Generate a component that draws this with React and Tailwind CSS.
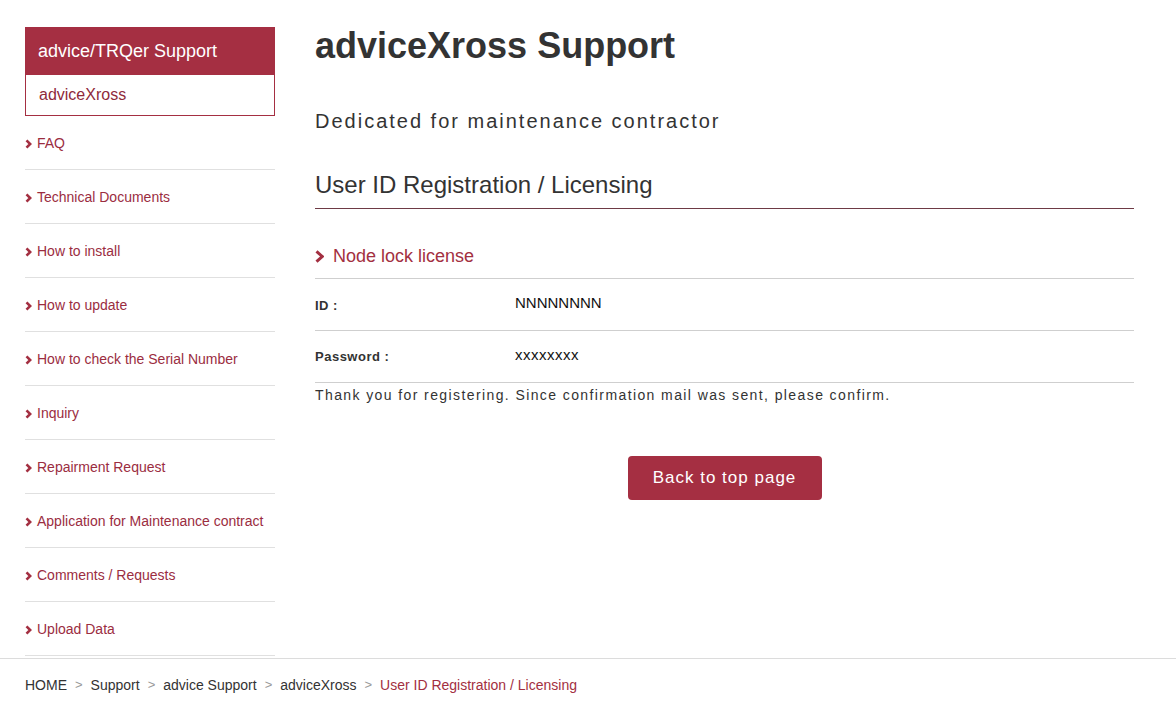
import React from "react";

const menu = [
  "FAQ",
  "Technical Documents",
  "How to install",
  "How to update",
  "How to check the Serial Number",
  "Inquiry",
  "Repairment Request",
  "Application for Maintenance contract",
  "Comments / Requests",
  "Upload Data",
];

const crumbs = ["HOME", "Support", "advice Support", "adviceXross"];

function Chevron({ w = 7, h = 10, stroke = 2.6 }) {
  return (
    <svg width={w} height={h} viewBox={`0 0 ${w} ${h}`} className="shrink-0">
      <polyline
        points={`1.5,1.3 ${w - 1.8},${h / 2} 1.5,${h - 1.3}`}
        fill="none"
        stroke="#a32f41"
        strokeWidth={stroke}
        strokeLinejoin="miter"
      />
    </svg>
  );
}

function App() {
  return (
    <div
      className="w-[1176px] min-h-[710px] bg-white text-[#333]"
      style={{ fontFamily: '"Liberation Sans", Arial, sans-serif' }}
    >
      <div className="flex px-[25px] pt-[27px]">
        {/* sidebar */}
        <aside className="w-[250px] shrink-0">
          <div className="bg-[#a52f42] h-[48px] flex items-center px-[13px] text-white text-[18px]">
            advice/TRQer Support
          </div>
          <div className="h-[41px] border border-t-0 border-[#a52f42] flex items-center px-[13px] text-[16px] text-[#8f2a3b]">
            adviceXross
          </div>
          <ul>
            {menu.map((item) => (
              <li
                key={item}
                className="h-[54px] border-b border-[#e0e0e0] flex items-center gap-[5px] pt-[2px] text-[14px] text-[#9b2d3f]"
              >
                <Chevron w={7} h={10} stroke={2.6} />
                <span>{item}</span>
              </li>
            ))}
          </ul>
        </aside>

        {/* main */}
        <main className="ml-10 w-[819px]">
          <h1 className="text-[36px] font-bold leading-[36px] text-[#333] mt-[1px]">
            adviceXross Support
          </h1>
          <p className="mt-[45px] text-[20px] tracking-[2px] leading-[24px] text-[#333]">
            Dedicated for maintenance contractor
          </p>
          <h2 className="mt-[38px] text-[24px] leading-[28px] pb-[9px] border-b border-[#6e3a45] text-[#333]">
            User ID Registration / Licensing
          </h2>

          <div className="mt-[35px] flex items-center gap-[9px] pb-[10px] border-b border-[#cfcfcf]">
            <Chevron w={9} h={13} stroke={3} />
            <span className="text-[18px] text-[#a32f41] leading-[24px]">Node lock license</span>
          </div>

          <div className="flex items-center h-[52px] border-b border-[#cfcfcf]">
            <div className="w-[200px] text-[13px] font-bold tracking-[0.5px] mt-[2px]">ID :</div>
            <div className="text-[15px] text-[#111] -mt-[2px]">NNNNNNNN</div>
          </div>
          <div className="flex items-center h-[52px] border-b border-[#cfcfcf]">
            <div className="w-[200px] text-[13px] font-bold tracking-[0.5px]">Password :</div>
            <div className="text-[15px] tracking-[0.5px] text-[#111] -mt-[2px]">xxxxxxxx</div>
          </div>
          <p className="text-[14px] tracking-[1.4px] leading-[24px] text-[#333]">
            Thank you for registering. Since confirmation mail was sent, please confirm.
          </p>

          <div className="flex justify-center mt-[49px]">
            <button
              type="button"
              className="w-[194px] h-[44px] rounded-[4px] bg-[#a52f42] text-white text-[17px] tracking-[1px]"
            >
              Back to top page
            </button>
          </div>
        </main>
      </div>

      {/* breadcrumb */}
      <div className="mt-[2px] border-t border-[#dcdcdc] h-[53px] flex items-center px-[25px] text-[14px]">
        {crumbs.map((c) => (
          <React.Fragment key={c}>
            <span className="text-[#333]">{c}</span>
            <span className="text-[#999] mx-[8px] text-[13px]">&gt;</span>
          </React.Fragment>
        ))}
        <span className="text-[#a32f41]">User ID Registration / Licensing</span>
      </div>
    </div>
  );
}

export default App;
